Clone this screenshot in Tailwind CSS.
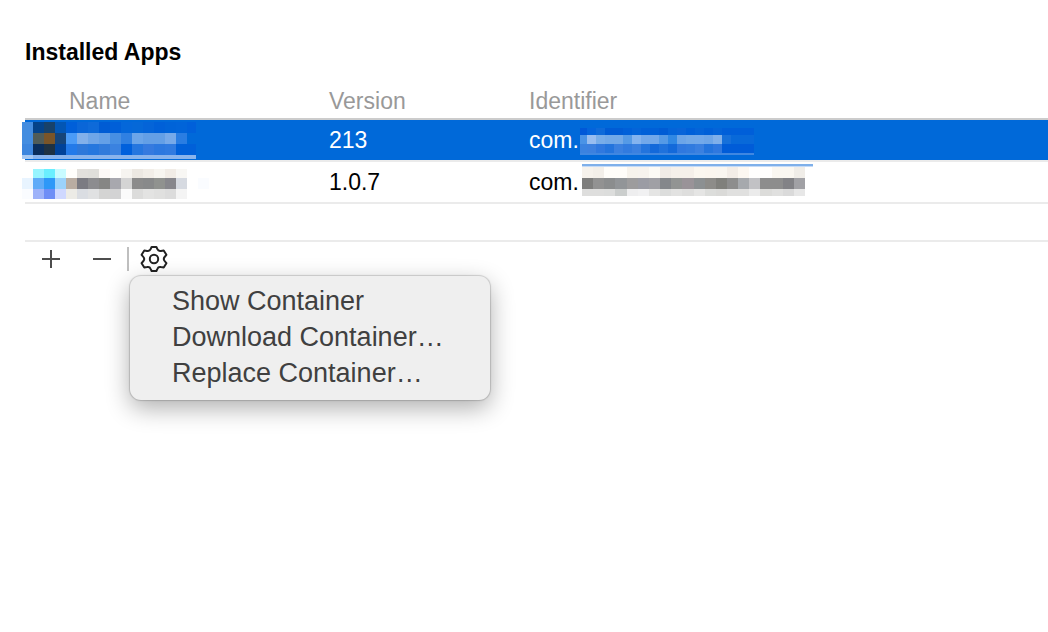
<!DOCTYPE html>
<html lang="en">
<head>
<meta charset="utf-8">
<title>Installed Apps</title>
<script src="https://cdn.jsdelivr.net/npm/@tailwindcss/browser@4"></script>
</head>
<body class="min-h-screen bg-white pt-9 pl-[25px] font-['Liberation_Sans',Arial,sans-serif] text-[23px] text-black">
<main>
  <h1 class="h-8 font-bold leading-8">Installed Apps</h1>
  <table class="mt-[11px] w-full table-fixed border-collapse text-left">
    <colgroup><col class="w-[304px]"><col class="w-[200px]"><col></colgroup>
    <thead>
      <tr class="h-10 border-b-2 border-[#cccccc] text-[#999999]">
        <th scope="col" class="p-0 pt-1 pl-11 leading-8 font-normal">Name</th>
        <th scope="col" class="p-0 pt-1 leading-8 font-normal">Version</th>
        <th scope="col" class="p-0 pt-1 leading-8 font-normal">Identifier</th>
      </tr>
    </thead>
    <tbody>
      <tr class="h-[42px] border-b-2 border-[#ebebeb] bg-[#0069d9] text-white">
        <td class="p-0"><svg id="name1" class="-ml-[3px] block h-[37px] w-[174px]" role="img" aria-label="Hidden app name" shape-rendering="crispEdges"></svg></td>
        <td class="p-0">213</td>
        <td class="p-0"><div class="flex items-center">com.<svg id="id1" viewBox="0 -2 174 29" class="ml-px h-[29px] w-[174px]" role="img" aria-label="Hidden identifier" shape-rendering="crispEdges"></svg></div></td>
      </tr>
      <tr class="h-[42px] border-b-2 border-[#ebebeb]">
        <td class="p-0"><svg id="name2" viewBox="0 -4 192 34" class="-ml-[3px] block h-[34px] w-[192px]" role="img" aria-label="Hidden app name" shape-rendering="crispEdges"></svg></td>
        <td class="p-0">1.0.7</td>
        <td class="p-0"><div class="flex items-center">com.<svg id="id2" class="ml-[3px] h-9 w-[231px]" role="img" aria-label="Hidden identifier" shape-rendering="crispEdges"></svg></div></td>
      </tr>
    </tbody>
  </table>
  <div class="mt-9 flex h-9 items-center border-t-2 border-[#ebebeb]">
    <button type="button" aria-label="Add" class="ml-4 flex size-5 items-center justify-center"><svg class="size-5" viewBox="0 0 20 20" fill="#4d4d4d"><path d="M1 9h18v2H1zM9 1h2v18H9z"/></svg></button>
    <button type="button" aria-label="Remove" class="ml-[31px] flex size-5 items-center justify-center"><svg class="size-5" viewBox="0 0 20 20" fill="#4d4d4d"><path d="M1 9h18v2H1z"/></svg></button>
    <span class="ml-[15px] h-6 w-0.5 bg-[#bfbfbf]"></span>
    <div class="relative ml-[11px] size-7">
      <button type="button" aria-label="Container actions" aria-haspopup="menu" aria-expanded="true" class="block size-7">
        <svg class="size-7" viewBox="-14 -14 28 28" fill="none" stroke="#222222" stroke-width="2" stroke-linejoin="round"><path d="M-2.4-12H2.4L3.4-9.8Q4.3-7.6 6.9-8.1L9.7-8.5 12.4-4.2 10.6-2Q9 0 10.6 2L12.4 4.2 9.7 8.5 6.9 8.1Q4.3 7.6 3.4 9.8L2.4 12H-2.4L-3.4 9.8Q-4.3 7.6-6.9 8.1L-9.7 8.5-12.4 4.2-10.6 2Q-9 0-10.6-2L-12.4-4.2-9.7-8.5-6.9-8.1Q-4.3-7.6-3.4-9.8Z"/><circle r="4.2"/></svg>
      </button>
      <div role="menu" class="absolute top-[31px] -left-2.5 w-[360px] rounded-[11px] bg-[#efefef] pt-[7px] pb-[9px] text-[27px] leading-9 text-[#404040] shadow-[0_0_1px_1px_rgba(0,0,0,0.16),0_8px_24px_rgba(0,0,0,0.32)]">
        <button type="button" role="menuitem" class="block w-full pl-[42px] text-left">Show Container</button>
        <button type="button" role="menuitem" class="block w-full pl-[42px] text-left">Download Container…</button>
        <button type="button" role="menuitem" class="block w-full pl-[42px] text-left">Replace Container…</button>
      </div>
    </div>
  </div>
</main>
<script>
// Each band: top, height, left, cell width, colours from left to right.
function mosaic(id, bands) {
  const svg = document.getElementById(id);
  for (const [y, h, x, w, list] of bands) {
    list.split(' ').forEach((c, i) => {
      if (c === '-') return;
      const r = document.createElementNS('http://www.w3.org/2000/svg', 'rect');
      r.setAttribute('x', x + i * w); r.setAttribute('y', y);
      r.setAttribute('width', w); r.setAttribute('height', h);
      r.setAttribute('fill', '#' + c);
      svg.appendChild(r);
    });
  }
}
mosaic('name1', [
  [0, 11, 0, 11, '448de0 04438a 18426a 0356b4 005fd9 0a66d8 0e6ad9 005cd4 005fd8 0467da 0568d8 0464d8 0060d8 0063d8 0164d9 0060da'],
  [11, 11, 0, 11, '448de0 505c58 7a5528 16457a 4a9bf7 82b0ea 6fa6e8 64a0e7 478fe3 2f80e2 6ba5e9 639fe6 639fe6 76a9e9 2a7de2 -'],
  [22, 11, 0, 11, '3d86de 0a2e5c 1f3242 004299 237ae9 2d78da 2577de 317bdb 3a82e0 0060dc 2576df 357adf 2c78df 2f7ae0 0060d9 0060d9'],
  [33, 4, 0, 11, 'a6c8f2'], [33, 4, 11, 163, '8ab4ec']
]);
mosaic('name2', [
  [0, 9, 0, 11, '- 98f5ff 6aefff c8fbff fffefb e2e0dc e0dfdb fdf9f6 fffefc f6f4f0 ece8e2 f2eee8 f7f5f0 f1ece6 f8f7f4'],
  [9, 11, 0, 11, 'e8f4ff 5fabf8 2e98f8 9bd2fb b9ada2 7b7b82 8c8c8f 868684 a8a8ae d4d4d4 8b8b8b 88898a 90928f 87878c d6dae1 - fafcff'],
  [20, 10, 0, 11, 'fafcff 9db2f9 6e8ef6 cfd8ff ecebe6 dadde2 e0e1e2 d4d4d3 d3d3d4 fbfbfb dcdcdb e3e3e2 e0e0df dcdcdc f4f4f4']
]);
mosaic('id1', [
  [0, 7, -2, 9, '0058d8 0464dc 0e6ad9 005cd5 005cd5 0060d9 0464d9 0060d8 0060d8 005cd5 0464d9 0864d9 0060d9 0464d9 0060d8 0464d9 005fd9 005fd9 005fd9 005fd9'],
  [7, 9, -2, 9, '4a93e6 98bdf0 78ade9 72a9e8 72a9e8 559ae6 84b3ef 72a8ea 72a8ea 559ae6 3088e4 6ca5e8 72a9e8 72a9ea 6ea6e8 80b0ea 1670da 0869d9 0869d9 0869d9'],
  [16, 9, -2, 9, '3a82e0 3c80df 2f78df 2374dd 3a80e0 317bdf 3a80e0 2374dd 1369da 1f72dc 1369da 2f78df 317bdf 3a80e0 2374dd 2f78df 005cd8 005cd8 005cd8 005cd8'],
  [25, 2, 0, 174, '3f87e1']
]);
mosaic('id2', [
  [0, 2, 0, 231, '7fb0ea'], [2, 1, 0, 231, 'c5dbf7'],
  [3, 11, 0, 11.15, 'f6f2ec f3efe9 fffdf9 fffdf9 f7f3ec f7f3ee fcfaf5 f0ebe6 f5f0ea f5f0ea fbf7f0 fbf6ef faf6f0 f3ede7 fcf7f1 fffefd fffefd faf7f1 faf7f1 f0ede8'],
  [14, 11, 0, 11.15, '7e7e7d 929292 8b8d8e 929598 9d9c9d 9b9ca4 a0a0a5 84878b 929493 999398 8c9092 8d8c89 80807c 8d8d8d a6a9ad c2c2c5 8d8d8d 8d8d8d 828286 a1a1a5'],
  [25, 7, 0, 11.15, 'dededd dededd dcdddc cbcecd eeeeef f1f1f2 e5e5e4 dcdddc e2e2e1 dededd e5e5e4 dcdddb dadad8 e0e0df e0e0df ebebeb dcdcda e0e0df dadada e7e7e7']
]);
</script>
</body>
</html>
